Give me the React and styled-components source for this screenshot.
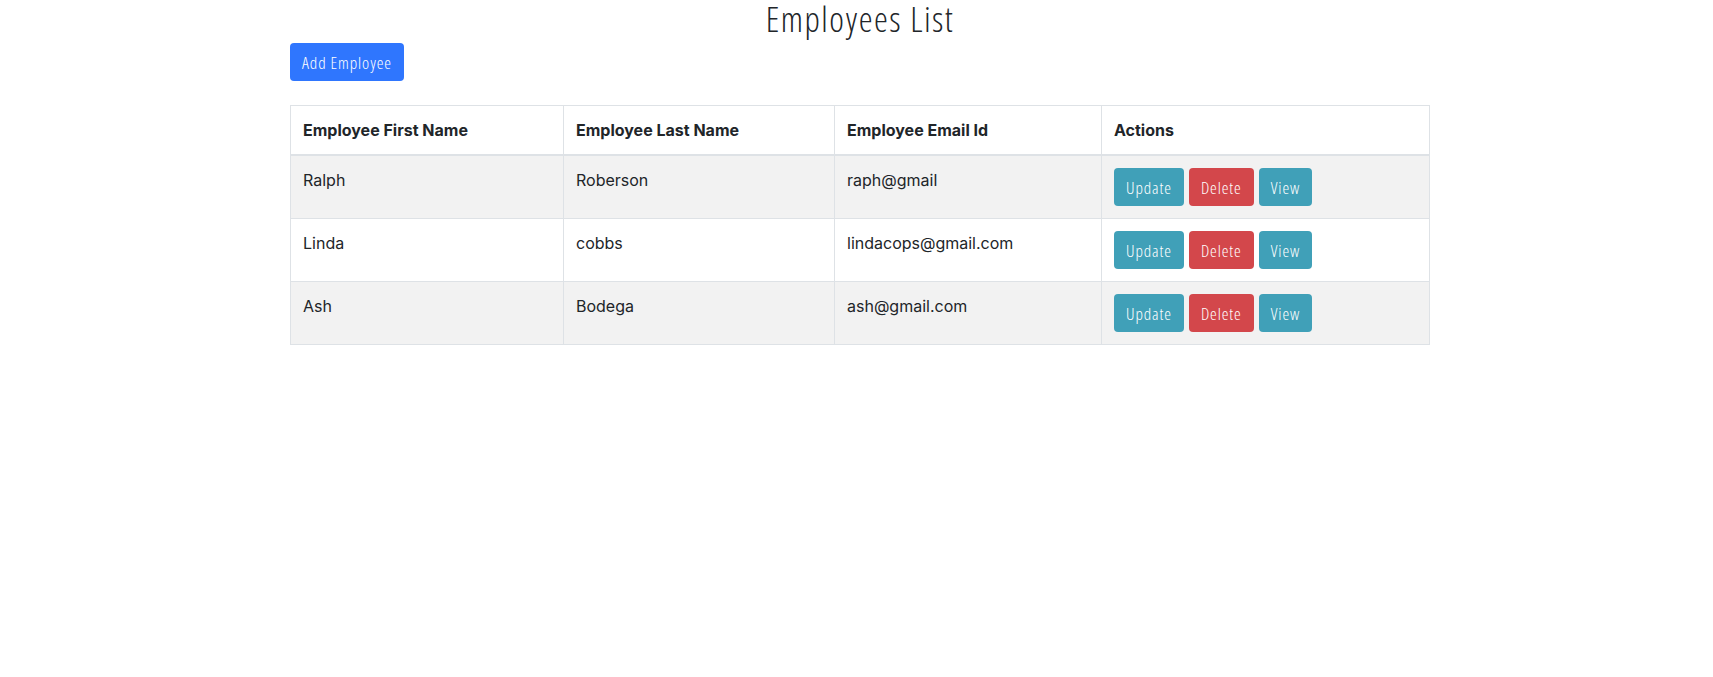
import styled, { createGlobalStyle } from "styled-components";

const employees = [
  { id: 1, firstName: "Ralph", lastName: "Roberson", emailId: "raph@gmail" },
  { id: 2, firstName: "Linda", lastName: "cobbs", emailId: "lindacops@gmail.com" },
  { id: 3, firstName: "Ash", lastName: "Bodega", emailId: "ash@gmail.com" },
];

function App() {
  return (
    <>
      <GlobalStyle />
      <Page>
        <Container>
          <Title>Employees List</Title>
          <Toolbar>
            <Button $variant="primary">Add Employee</Button>
          </Toolbar>
          <Table>
            <colgroup>
              <col style={{ width: 273 }} />
              <col style={{ width: 271 }} />
              <col style={{ width: 267 }} />
              <col />
            </colgroup>
            <thead>
              <tr>
                <Th>Employee First Name</Th>
                <Th>Employee Last Name</Th>
                <Th>Employee Email Id</Th>
                <Th>Actions</Th>
              </tr>
            </thead>
            <tbody>
              {employees.map((employee) => (
                <Row key={employee.id}>
                  <Td>{employee.firstName}</Td>
                  <Td>{employee.lastName}</Td>
                  <Td>{employee.emailId}</Td>
                  <Td>
                    <Actions>
                      <Button $variant="info">Update</Button>
                      <Button $variant="danger">Delete</Button>
                      <Button $variant="info">View</Button>
                    </Actions>
                  </Td>
                </Row>
              ))}
            </tbody>
          </Table>
        </Container>
      </Page>
    </>
  );
}

const GlobalStyle = createGlobalStyle`
  body {
    margin: 0;
    background: #fff;
    color: #212529;
    font-family: Inter, "Noto Sans", sans-serif;
  }
`;

const Page = styled.div`
  padding-left: 7px;
`;

const Container = styled.div`
  max-width: 1140px;
  margin: 0 auto;
`;

const Title = styled.h2`
  margin: 0;
  padding-top: 3px;
  text-align: center;
  font-family: "Open Sans", sans-serif;
  font-stretch: 75%;
  font-weight: 300;
  font-size: 35px;
  letter-spacing: 1.5px;
  line-height: 31px;
  color: #212529;
`;

const Toolbar = styled.div`
  display: flex;
  margin-top: 9px;
  margin-bottom: 24px;
`;

const colors = {
  primary: "#2f76fe",
  info: "#40a0b8",
  danger: "#d3474b",
};

const Button = styled.button`
  height: 38px;
  padding: 0 12px;
  border: none;
  border-radius: 4px;
  background-color: ${(p) => colors[p.$variant]};
  color: #fff;
  font-family: "Open Sans", sans-serif;
  font-stretch: 75%;
  font-weight: 300;
  font-size: 17px;
  letter-spacing: 0.9px;
  cursor: pointer;
`;

const Table = styled.table`
  width: 100%;
  border-collapse: collapse;
  table-layout: fixed;
  font-size: 16px;
`;

const Th = styled.th`
  padding: 12px;
  height: 24px;
  text-align: left;
  font-weight: 700;
  line-height: 24px;
  border: 1px solid #dee2e6;
  border-bottom-width: 2px;
`;

const Row = styled.tr`
  &:nth-child(odd) {
    background-color: #f2f2f2;
  }
`;

const Td = styled.td`
  padding: 12px;
  vertical-align: top;
  line-height: 24px;
  border: 1px solid #dee2e6;
`;

const Actions = styled.div`
  display: flex;
  gap: 5px;
`;

export default App;
